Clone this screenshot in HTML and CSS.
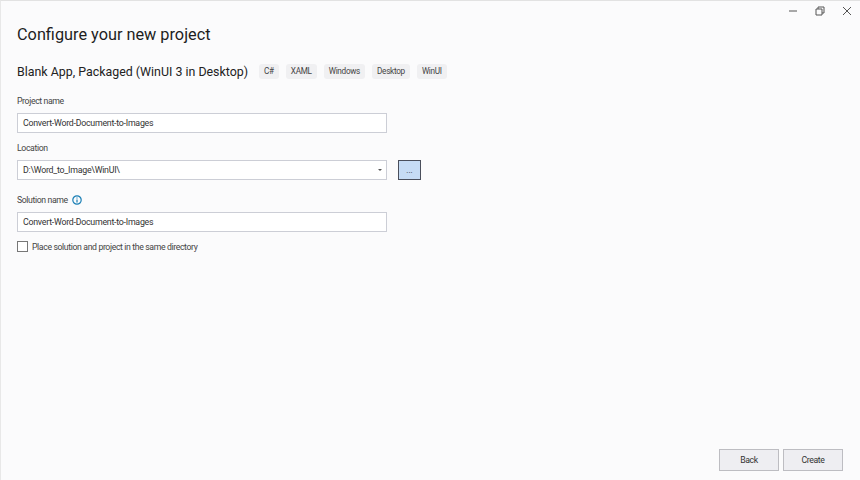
FILE: index.html
```html
<!DOCTYPE html>
<html lang="en">
<head>
    <meta charset="UTF-8">
    <title>Configure your new project</title>
    <link rel="stylesheet" href="styles.css">
</head>
<body>

<div class="window">
    <div class="title-bar">
        <svg class="win-icon" width="10" height="10" viewBox="0 0 10 10"><path d="M1 5H9" /></svg>
        <svg class="win-icon" width="10" height="10" viewBox="0 0 10 10"><path d="M1 3H7V9H1ZM3 3V1H9V7H7" /></svg>
        <svg class="win-icon" width="10" height="10" viewBox="0 0 10 10"><path d="M1 1L9 9M9 1L1 9" /></svg>
    </div>

    <div class="content">
        <h1>Configure your new project</h1>

        <div class="template-row">
            <h2>Blank App, Packaged (WinUI 3 in Desktop)</h2>
            <div class="tags">
                <span class="tag">C#</span>
                <span class="tag">XAML</span>
                <span class="tag">Windows</span>
                <span class="tag">Desktop</span>
                <span class="tag">WinUI</span>
            </div>
        </div>

        <div class="field field-project">
            <label>Project name</label>
            <div class="text-input">Convert-Word-Document-to-Images</div>
        </div>

        <div class="field field-location">
            <label>Location</label>
            <div class="location-row">
                <div class="text-input combo">
                    <span>D:\Word_to_Image\WinUI\</span>
                    <span class="combo-arrow"></span>
                </div>
                <div class="browse">...</div>
            </div>
        </div>

        <div class="field field-solution">
            <label>Solution name
                <svg class="info" width="10" height="10" viewBox="0 0 10 10">
                    <circle cx="5" cy="5" r="4.2" />
                    <path d="M5 4.4V7.6M5 2.4V3.5" />
                </svg>
            </label>
            <div class="text-input">Convert-Word-Document-to-Images</div>
        </div>

        <div class="check-row">
            <span class="checkbox"></span>
            <span>Place solution and project in the same directory</span>
        </div>
    </div>

    <div class="footer">
        <div class="btn">Back</div>
        <div class="btn">Create</div>
    </div>
</div>

</body>
</html>
```

FILE: styles.css
```css
body {
    margin: 0;
    padding: 0;
    font-family: Roboto, "Open Sans", sans-serif;
    background: #fbfbfc;
    color: #333;
}

.window {
    height: 480px;
    box-sizing: border-box;
    border-top: 1px solid #e2e2e2;
    border-left: 1px solid #e8e8e8;
    display: flex;
    flex-direction: column;
}

.title-bar {
    display: flex;
    justify-content: flex-end;
    gap: 17px;
    padding: 5px 8px 0 0;
}

.win-icon {
    fill: none;
    stroke: #555;
    stroke-width: 1;
}

.content {
    flex: 1;
    padding: 0 0 0 16px;
}

h1 {
    margin: 0;
    padding-top: 7px;
    font-size: 16.3px;
    line-height: 24px;
    font-weight: 400;
    color: #1e1e1e;
}

.template-row {
    display: flex;
    align-items: center;
    margin-top: 16px;
    height: 16px;
}

h2 {
    margin: 0;
    font-size: 12.4px;
    font-weight: 400;
    color: #222;
    white-space: nowrap;
}

.tags {
    display: flex;
    gap: 7px;
    margin-left: 11px;
}

.tag {
    background: #f0f0f2;
    border-radius: 3px;
    padding: 0 5px;
    height: 15px;
    line-height: 15px;
    font-size: 8.2px;
    letter-spacing: -0.3px;
    color: #444;
}

.field label {
    display: flex;
    align-items: center;
    gap: 4px;
    font-size: 8.7px;
    letter-spacing: -0.37px;
    line-height: 12px;
    color: #444;
}

.field-project {
    margin-top: 16px;
}

.field-location {
    margin-top: 9px;
}

.field-solution {
    margin-top: 14px;
}

.text-input {
    box-sizing: border-box;
    width: 370px;
    height: 20px;
    margin-top: 6px;
    padding: 0 5px;
    background: #fff;
    border: 1px solid #ccced6;
    font-size: 8.8px;
    letter-spacing: -0.25px;
    line-height: 18px;
    color: #333;
}

.location-row {
    display: flex;
    gap: 11px;
}

.combo {
    display: flex;
    justify-content: space-between;
    align-items: center;
}

.combo-arrow {
    border-left: 2px solid transparent;
    border-right: 2px solid transparent;
    border-top: 2px solid #555;
    margin-right: -1px;
}

.browse {
    box-sizing: border-box;
    width: 23px;
    height: 20px;
    margin-top: 6px;
    background: #c6dcf5;
    border: 1px solid #4a4f5c;
    font-size: 8px;
    line-height: 19px;
    text-align: center;
}

.info {
    fill: none;
    stroke: #1a7fb5;
    stroke-width: 1.2;
}

.check-row {
    display: flex;
    align-items: center;
    gap: 4px;
    margin-top: 9px;
    font-size: 8.7px;
    letter-spacing: -0.37px;
    color: #444;
}

.checkbox {
    box-sizing: border-box;
    width: 11px;
    height: 11px;
    background: #fff;
    border: 1px solid #777;
}

.footer {
    display: flex;
    justify-content: flex-end;
    gap: 4px;
    padding: 0 17px 9px 0;
}

.btn {
    box-sizing: border-box;
    width: 60px;
    height: 22px;
    background: #eeeef2;
    border: 1px solid #bdbdc2;
    font-size: 8.7px;
    letter-spacing: -0.4px;
    line-height: 20px;
    text-align: center;
    color: #333;
}
```
